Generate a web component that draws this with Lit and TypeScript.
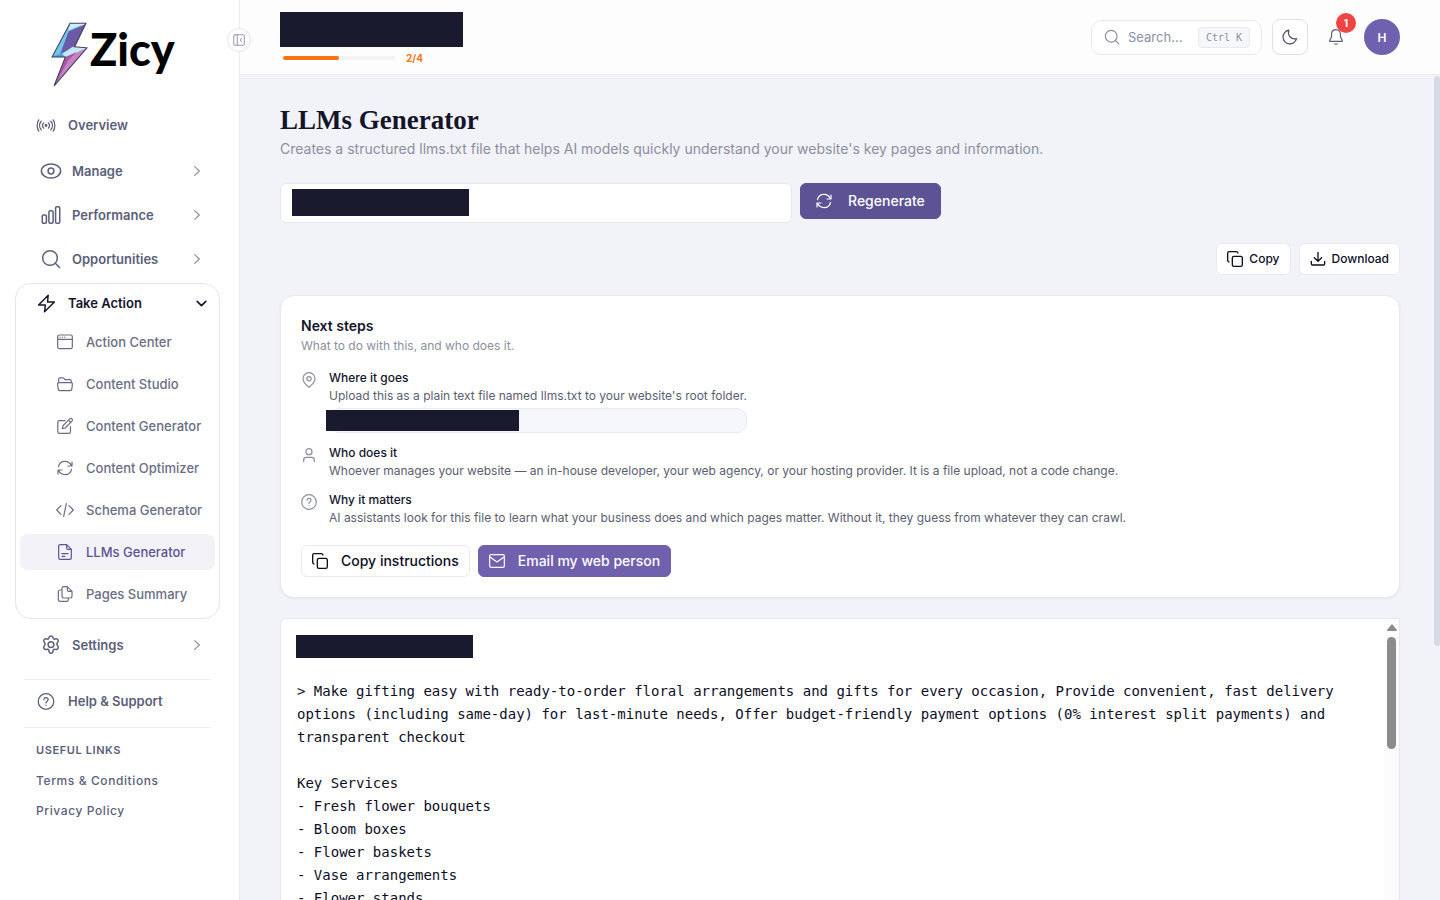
import { LitElement, html, css, svg, nothing } from "lit";
import { customElement, property, state } from "lit/decorators.js";
import { classMap } from "lit/directives/class-map.js";

const icons: Record<string, unknown> = {
  overview: svg`<circle cx="12" cy="12" r="1.2" fill="currentColor"/><path d="M8.6 8.2c-1.9 2.2-1.9 5.4 0 7.6M15.400 8.200c1.900 2.200 1.900 5.400 0 7.600M5.200 6c-3 3.500-3 8.500 0 12M18.800 6c3 3.500 3 8.500 0 12M1.800 4c-3 4.500-3 11.500 0 16M22.200 4c3 4.500 3 11.500 0 16"/>`,
  eye: svg`<path d="M12 3.500c6 0 11.500 3.500 11.500 8.500s-5.500 8.500-11.500 8.500S.5 17 .5 12 6 3.500 12 3.500z"/><circle cx="12" cy="12" r="3.500"/>`,
  bars: svg`<rect x="1.500" y="12" width="5" height="10" rx="1.500"/><rect x="9.500" y="7" width="5" height="15" rx="1.500"/><rect x="17.500" y="2" width="5" height="20" rx="1.500"/>`,
  search: svg`<circle cx="10.800" cy="10.800" r="8.800"/><path d="m17.200 17.200 5 5"/>`,
  bolt: svg`<path d="M14.200 1.500 2 14h8.500l-1 8.500L22 10h-8.700z"/>`,
  window: svg`<rect x="1" y="1.500" width="22" height="20.500" rx="2.500"/><path d="M1 8h22M4.500 4.800h.1M8 4.800h.1M11.500 4.800h.1"/>`,
  folder: svg`<path d="M2.500 10V5c0-1.500.8-2.300 2.200-2.300h4c.8 0 1.500.3 2 .9l1.300 1.700h7c1.500 0 2.500.9 2.500 2.400V10M3.200 9.800h17.600c1.500 0 2.500 1 2.300 2.500l-.8 7c-.2 1.500-1.100 2.500-2.600 2.500H4.300c-1.500 0-2.400-1-2.600-2.500l-.8-7C.7 10.800 1.700 9.800 3.200 9.800z"/>`,
  edit: svg`<path d="M12 4H3.700C2.200 4 1.200 5 1.200 6.500v14c0 1.500 1 2.500 2.500 2.500h14c1.500 0 2.500-1 2.500-2.500V13M8 16l1-4.500L19.200 1.400c1-1 2.500-.9 3.300 0s.8 2.300 0 3.200L12.300 15zM17.500 3.500l3.200 3.200"/>`,
  sync: svg`<path d="M22.500 3v6H16.500M1.500 21v-6H7.500M2.200 10C3.200 5.500 7.200 2 12 2c4 0 7.800 2.500 9.800 6.500M21.800 14c-1 4.500-5 8-9.800 8-4 0-7.800-2.500-9.800-6.500"/>`,
  code: svg`<path d="M6 5.500 -.5 12l6.500 6.500M18 5.500l6.500 6.500-6.500 6.500M14 2.500l-4 19"/>`,
  file: svg`<path d="M14.500 1H5C3.500 1 2.500 2 2.500 3.500v17C2.500 22 3.500 23 5 23h14c1.500 0 2.500-1 2.500-2.500V8zM14.500 1v5c0 1.300.7 2 2 2h5M7.500 14.500h9M7.500 18.500h4.500"/>`,
  files: svg`<path d="M15.500 1H10C8.500 1 7.500 2 7.500 3.500v12c0 1.500 1 2.500 2.500 2.500h10c1.500 0 2.500-1 2.500-2.500V8zM15.500 1v5c0 1.300.7 2 2 2h5M7.500 6H4.500C3 6 2 7 2 8.500v12C2 22 3 23 4.500 23h10c1.500 0 2.500-1 2.500-2.500V18"/>`,
  gear: svg`<path d="M9.800 2.500c.3-.9 1-1.300 2.200-1.300s1.900.4 2.200 1.300l.4 1.300c.3.800 1.200 1.300 2 1.100l1.400-.3c1.100-.2 1.800.2 2.400 1.300.6 1 .6 1.800-.1 2.600l-.9 1c-.6.700-.6 1.600 0 2.300l.9 1.700c.7.800.7 1.600.1 2.600-.6 1.100-1.300 1.500-2.400 1.300l-1.400-.3c-.8-.2-1.700.3-2 1.100l-.4 2.300c-.3.900-1 1.300-2.200 1.300s-1.900-.4-2.200-1.300l-.4-2.300c-.3-.8-1.200-1.300-2-1.100l-1.400.3c-1.100.2-1.800-.2-2.400-1.300-.6-1-.6-1.800.1-2.600l.9-1.700c.6-.7.6-1.600 0-2.300l-.9-1c-.7-.8-.7-1.600-.1-2.600.6-1.100 1.300-1.500 2.400-1.300l1.400.3c.8.200 1.700-.3 2-1.100z"/><circle cx="12" cy="11.500" r="3.500"/>`,
  help: svg`<circle cx="12" cy="12" r="11"/><path d="M9 9.200c.2-1.600 1.400-2.700 3-2.700 1.700 0 3 1.200 3 2.800 0 2.200-3 2.300-3 4.700M12 17.200v.2"/>`,
  chevron: svg`<path d="m8 4.500 8 7.500-8 7.500"/>`,
  down: svg`<path d="m4 8 8 8 8-8"/>`,
  moon: svg`<path d="M21.800 14.500A10.300 10.300 0 1 1 10.300 1.800c-2.600 7.700 3.500 14.300 11.500 12.700z"/>`,
  bell: svg`<path d="M12 .8c-4 0-6.700 3-6.700 7v4L2.500 17.200c-.3.800 0 1.300 1 1.300h17c1 0 1.300-.5 1-1.300l-2.800-5.400v-4c0-4-2.700-7-6.700-7zM9.800 22.500h4.400"/>`,
  copy: svg`<rect x="8" y="8" width="15" height="15" rx="2.500"/><path d="M3 16.500C1.700 16 1 15.300 1 14V3.500C1 2 2 1 3.500 1H14c1.300 0 2 .7 2.500 2"/>`,
  download: svg`<path d="M12 2v13.500M6.500 10l5.500 5.500 5.500-5.500M2 15.500V19c0 1.300.8 2 2 2h16c1.300 0 2-.8 2-2v-3.500"/>`,
  pin: svg`<path d="M21 10c0 5.500-6 10.500-9 13C9 20.500 3 15.500 3 10a9 9 0 0 1 18 0z"/><circle cx="12" cy="10" r="3.200"/>`,
  user: svg`<circle cx="12" cy="7" r="4.500"/><path d="M4 22v-2.500C4 17 5.800 15.500 8 15.500h8c2.200 0 4 1.500 4 4V22"/>`,
  mail: svg`<rect x="1" y="2.500" width="22" height="19" rx="2"/><path d="m2 6.500 10 7 10-7"/>`,
  panel: svg`<rect x="1.500" y="1.500" width="21" height="21" rx="2.500"/><path d="M8.500 1.500v21M17 9l-3 3 3 3"/>`,
};

@customElement("ui-icon")
class UiIcon extends LitElement {
  @property() name = "";
  static styles = css`
    :host { display: inline-flex; flex: none; width: 16px; height: 16px; }
    .glyph { width: 100%; height: 100%; fill: none; stroke: currentColor; stroke-width: var(--stroke, 1.8);
      stroke-linecap: round; stroke-linejoin: round; overflow: visible; }
  `;
  render() {
    return html`<svg class="glyph" viewBox="0 0 24 24" aria-hidden="true">${icons[this.name]}</svg>`;
  }
}

@customElement("app-sidebar")
class AppSidebar extends LitElement {
  @state() private open = true;

  static styles = css`
    :host { display: block; position: relative; z-index: 2; box-sizing: border-box; flex: none; width: 240px;
      background: #fff; border-right: 1px solid #e8eaf2; font-size: 13px; color: #5b607a; }
    a, button { color: inherit; font: inherit; text-decoration: none; }
    button { background: none; border: 0; padding: 0; cursor: pointer; text-align: left; }
    .brand { display: flex; align-items: center; gap: 2px; height: 68px; padding: 21px 0 14px 50px; }
    .mark { width: 38px; height: 66px; flex: none; }
    .word { font: 900 45px/60px Lato, sans-serif; color: #000; padding-bottom: 12px; }
    .row { display: flex; align-items: center; box-sizing: border-box; width: 100%; height: 44px; font-weight: 600; }
    .plain { padding: 0 36px; gap: 12px; }
    .plain ui-icon { width: 20px; height: 17px; }
    .parent { padding: 0 35px 0 41px; gap: 11px; }
    .parent ui-icon { width: 20px; height: 20px; }
    .label { flex: 1; }
    .row .arrow { width: 14px; height: 14px; color: #8b8fa6; --stroke: 2; }
    .first { margin-bottom: 2px; }
    .group { box-sizing: border-box; margin: 2px 19px 4px 15px; border: 1px solid #e4e5f0; border-radius: 16px;
      padding: 0 4px 6px; }
    .head { height: 38px; padding: 0 7px 0 17px; gap: 12px; color: #14152b; }
    .head ui-icon { width: 19px; height: 19px; }
    .head .arrow { width: 13px; height: 13px; color: #14152b; --stroke: 3; }
    .sub { display: flex; flex-direction: column; gap: 6px; padding-top: 2px; }
    .item { display: flex; align-items: center; gap: 13px; height: 36px; padding-left: 37px; border-radius: 8px;
      font-weight: 500; color: #6a6e85; }
    .item.on { background: #f3f2f8; color: #5d5294; }
    .rule { height: 1px; border: 0; margin: 0 28px 0 24px; background: #eceef4; }
    .settings { margin-bottom: 12px; }
    .help { height: 42px; margin-bottom: 5px; }
    .links { display: flex; flex-direction: column; padding: 7px 36px; font-size: 12px; line-height: 30px; font-weight: 500;
      letter-spacing: 0.05em; }
    .title { margin: 0 0 1px; font-size: 11px; font-weight: 600; line-height: 30px; }
    .toggle { position: absolute; top: 28px; right: -12px; box-sizing: border-box; width: 24px; height: 24px;
      border: 1px solid #e4e5f0; border-radius: 50%; background: #fff; display: grid; place-items: center; color: #8b8fae; }
    .toggle ui-icon { width: 12px; height: 12px; }
  `;

  private parent(icon: string, label: string, cls = "") {
    return html`<button class="row parent ${cls}"><ui-icon name=${icon}></ui-icon><span class="label">${label}</span
      ><ui-icon class="arrow" name="chevron"></ui-icon></button>`;
  }

  render() {
    const items = [
      ["window", "Action Center"], ["folder", "Content Studio"], ["edit", "Content Generator"], ["sync", "Content Optimizer"],
      ["code", "Schema Generator"], ["file", "LLMs Generator"], ["files", "Pages Summary"],
    ];
    return html`
      <div class="brand">
        <svg class="mark" viewBox="0 0 37 64" aria-hidden="true">
          <path fill="#70c5ec" d="M19.500 1.500 2 34h13l5-7L15 26 31 2z"/>
          <path fill="#c9edf8" d="M19.500 1.500 35 1.500 18 8z"/>
          <path fill="#6b5aa8" d="M35 1.500 18 9 10 31 24 24z"/>
          <path fill="#4e9ed8" d="M2 34 11 30l4 4z"/>
          <path fill="#bfe9f5" d="M12 31 22 24l14 1-21 9z"/>
          <path fill="#c583c4" d="M36 25 4 62l12-28z"/>
          <path fill="#a956a5" d="M15 34 4 62l14-25 8-8z"/>
          <path fill="none" stroke="#3d3d55" d="M19.500 1H35L24 24l12 1L4 62l11-28H2z"/>
        </svg>
        <span class="word">Zicy</span>
      </div>
      <nav aria-label="Main">
        <a class="row plain first" href="#overview"><ui-icon name="overview"></ui-icon>Overview</a>
        ${this.parent("eye", "Manage")} ${this.parent("bars", "Performance")} ${this.parent("search", "Opportunities")}
        <div class="group">
          <button class="row head" aria-expanded=${this.open} @click=${() => (this.open = !this.open)}>
            <ui-icon name="bolt"></ui-icon><span class="label">Take Action</span><ui-icon class="arrow" name="down"></ui-icon>
          </button>
          ${this.open
            ? html`<div class="sub">${items.map(([icon, text]) => html`<a href="#${icon}"
                class=${classMap({ item: true, on: icon === "file" })}><ui-icon name=${icon}></ui-icon>${text}</a>`)}</div>`
            : nothing}
        </div>
        ${this.parent("gear", "Settings", "settings")}
        <hr class="rule" />
        <a class="row plain help" href="#help"><ui-icon name="help"></ui-icon>Help &amp; Support</a>
        <hr class="rule" />
        <div class="links">
          <h2 class="title">USEFUL LINKS</h2>
          <a href="#terms">Terms &amp; Conditions</a>
          <a href="#privacy">Privacy Policy</a>
        </div>
      </nav>
      <button class="toggle" aria-label="Collapse sidebar"><ui-icon name="panel"></ui-icon></button>
    `;
  }
}

@customElement("app-header")
class AppHeader extends LitElement {
  static styles = css`
    :host { display: flex; justify-content: space-between; align-items: flex-start; box-sizing: border-box; flex: none;
      height: 75px; padding: 12px 40px 0; background: #fdfdfd; border-bottom: 1px solid #eceef3; }
    button { padding: 0; font: inherit; cursor: pointer; }
    .mask { width: 183px; height: 35px; background: #1a1a2e; }
    .progress { display: flex; align-items: center; gap: 11px; padding: 4px 3px; font-size: 10px; line-height: 14px;
      font-weight: 700; color: #f97316; }
    .track { width: 112px; height: 4px; border-radius: 2px; background: #f3f3f4; }
    .fill { height: 4px; border-radius: 2px; background: #f97316; }
    .tools { display: flex; align-items: center; gap: 10px; height: 50px; }
    .search { display: flex; align-items: center; gap: 8px; box-sizing: border-box; width: 171px; height: 35px; padding: 0 11px 0 12px;
      border: 1px solid #e8e9f2; border-radius: 10px; background: #fff; color: #8b8fa6; }
    .field { flex: 1; min-width: 0; border: 0; outline: 0; padding: 0; background: none; font: 400 13px/20px Inter, sans-serif; }
    .field::placeholder { color: #8b8fa6; opacity: 1; }
    .key { box-sizing: border-box; height: 21px; padding: 0 7px; border: 1px solid #e8eaf2; border-radius: 4px;
      background: #f6f7fb; font: 500 10px/19px "DejaVu Sans Mono", monospace; }
    .square { display: grid; place-items: center; box-sizing: border-box; width: 36px; height: 36px; border: 1px solid #dfe0ee;
      border-radius: 8px; background: #fff; color: #4b4f6b; }
    .bell { position: relative; display: grid; place-items: center; width: 36px; height: 36px; border: 0; background: none;
      color: #5b607a; }
    .badge { position: absolute; top: -6px; right: -2px; width: 20px; border-radius: 50%; background: #ef4444; color: #fff;
      font-size: 10px; line-height: 20px; font-weight: 700; }
    .avatar { width: 36px; height: 36px; border: 0; border-radius: 50%; background: #6f61ae; color: #fff; font-size: 12px;
      font-weight: 600; }
  `;
  render() {
    const done = 2, total = 4;
    return html`
      <div>
        <div class="mask"></div>
        <div class="progress">
          <div class="track"><div class="fill" style="width:${(done / total) * 100}%"></div></div>
          <span>${done}/${total}</span>
        </div>
      </div>
      <div class="tools">
        <label class="search"><ui-icon name="search"></ui-icon
          ><input class="field" type="text" placeholder="Search..." aria-label="Search" /><kbd class="key">Ctrl K</kbd></label>
        <button class="square" aria-label="Dark mode"><ui-icon name="moon"></ui-icon></button>
        <button class="bell" aria-label="Notifications"><ui-icon name="bell"></ui-icon><span class="badge">1</span></button>
        <button class="avatar" aria-label="Account">H</button>
      </div>
    `;
  }
}

const OUTPUT = `> Make gifting easy with ready-to-order floral arrangements and gifts for every occasion, Provide convenient, fast delivery options (including same-day) for last-minute needs, Offer budget-friendly payment options (0% interest split payments) and transparent checkout

Key Services
- Fresh flower bouquets
- Bloom boxes
- Flower baskets
- Vase arrangements
- Flower stands`;

@customElement("app-root")
class AppRoot extends LitElement {
  static styles = css`
    :host { display: flex; height: 100vh; overflow: hidden; font-family: Inter, sans-serif; background: #f2f3f8; color: #14152b; }
    .body { flex: 1; min-width: 0; display: flex; flex-direction: column; position: relative; }
    .page { flex: 1; min-height: 0; overflow-y: auto; scrollbar-width: none; padding: 29px 40px 40px; }
    .pagebar { position: absolute; top: 76px; right: 0; width: 6px; height: 570px; border-radius: 3px; background: #d6d9e6; }
    h1, h2, h3, p { margin: 0; }
    h1 { font: 700 27px/32px "Liberation Serif", serif; }
    .lead { font-size: 14px; line-height: 24px; margin-bottom: 22px; padding-top: 1px; color: #8b8f9f; }
    .form { display: flex; align-items: flex-start; gap: 8px; margin-bottom: 20px; }
    .url { position: relative; width: 512px; }
    .url input { display: block; box-sizing: border-box; width: 100%; height: 40px; border: 1px solid #e5e7f0; border-radius: 6px;
      padding: 0 12px; background: #fff; }
    .mask { background: #1a1a2e; }
    .url .mask { position: absolute; top: 6px; left: 12px; width: 177px; height: 27px; }
    .btn { display: inline-flex; align-items: center; box-sizing: border-box; height: 32px; padding: 0 10px; border: 1px solid #e9eaf0;
      border-radius: 6px; background: #fff; color: #0d0e1f; font: 500 14px/20px Inter, sans-serif; cursor: pointer; }
    .btn ui-icon { --stroke: 2; }
    .small { font-size: 12px; gap: 6px; }
    .wide { gap: 13px; }
    .purple { background: #6f61ae; border-color: #6f61ae; color: #fff; }
    .purple ui-icon { --stroke: 1.8; }
    .regen { height: 36px; padding: 0 15px; gap: 16px; background: #5d5294; border-color: #5d5294; }
    .tools { display: flex; justify-content: flex-end; gap: 8px; margin-bottom: 20px; }
    .card { border: 1px solid #e8e9f1; border-radius: 14px; background: #fff; padding: 20px; margin-bottom: 20px;
      box-shadow: 0 1px 2px #1a1a2e0d; }
    .card h2 { font-size: 14px; line-height: 20px; font-weight: 600; }
    .hint { font-size: 12px; line-height: 20px; color: #8b8f9f; margin-bottom: 13px; }
    .steps { display: flex; flex-direction: column; align-items: flex-start; gap: 11px; margin-bottom: 18px; font-size: 12px;
      line-height: 18px; }
    .step { display: flex; gap: 12px; }
    .step ui-icon { margin-top: 3px; color: #8b8fa3; }
    .step h3 { font-size: 12px; line-height: 18px; font-weight: 500; }
    .step p { color: #5a5e70; }
    .pill { position: relative; box-sizing: border-box; height: 25px; margin-top: 3px; border: 1px solid #eaebf3; border-radius: 10px;
      background: #f6f7fc; }
    .pill .mask { position: absolute; top: 1px; left: -4px; width: 193px; height: 21px; }
    .actions { display: flex; gap: 8px; }
    .output { position: relative; box-sizing: border-box; height: 600px; border: 1px solid #e5e6ef; border-radius: 6px 0 0 6px;
      background: #fff; padding: 16px 48px 16px 16px; }
    .output .mask { width: 177px; height: 23px; margin-left: -1px; }
    pre { margin: 22px 0 0; font: 400 14px/23px "DejaVu Sans Mono", monospace; white-space: pre-wrap; color: #0d0e1f; }
    .bar { position: absolute; top: 0; right: 0; bottom: 0; width: 15px; background: #fcfcfc; display: flex;
      flex-direction: column; align-items: center; gap: 6px; padding-top: 5px; box-sizing: border-box; }
    .up { width: 10px; height: 7px; fill: #8b8b8b; }
    .thumb { width: 9px; height: 112px; border-radius: 5px; background: #8b8b8b; }
  `;

  private step(icon: string, title: string, text: string, extra: unknown = nothing) {
    return html`<div class="step"><ui-icon name=${icon}></ui-icon><div><h3>${title}</h3><p>${text}</p>${extra}</div></div>`;
  }

  render() {
    return html`
      <app-sidebar></app-sidebar>
      <div class="body">
        <app-header></app-header>
        <main class="page">
          <h1>LLMs Generator</h1>
          <p class="lead">Creates a structured llms.txt file that helps AI models quickly understand your website's key pages and information.</p>
          <form class="form" @submit=${(e: Event) => e.preventDefault()}>
            <div class="url"><input type="url" aria-label="Website URL" /><div class="mask"></div></div>
            <button class="btn purple regen"><ui-icon name="sync"></ui-icon>Regenerate</button>
          </form>
          <div class="tools">
            <button class="btn small"><ui-icon name="copy"></ui-icon>Copy</button>
            <button class="btn small"><ui-icon name="download"></ui-icon>Download</button>
          </div>
          <section class="card">
            <h2>Next steps</h2>
            <p class="hint">What to do with this, and who does it.</p>
            <div class="steps">
              ${this.step("pin", "Where it goes", "Upload this as a plain text file named llms.txt to your website's root folder.",
                html`<div class="pill"><div class="mask"></div></div>`)}
              ${this.step("user", "Who does it", "Whoever manages your website — an in-house developer, your web agency, or your hosting provider. It is a file upload, not a code change.")}
              ${this.step("help", "Why it matters", "AI assistants look for this file to learn what your business does and which pages matter. Without it, they guess from whatever they can crawl.")}
            </div>
            <div class="actions">
              <button class="btn wide"><ui-icon name="copy"></ui-icon>Copy instructions</button>
              <button class="btn wide purple"><ui-icon name="mail"></ui-icon>Email my web person</button>
            </div>
          </section>
          <section class="output">
            <div class="mask"></div>
            <pre>${OUTPUT}</pre>
            <div class="bar"><svg class="up" viewBox="0 0 10 7"><path d="M5 0 10 6Q10 7 9 7H1Q0 7 0 6z"/></svg><div class="thumb"></div></div>
          </section>
        </main>
        <div class="pagebar"></div>
      </div>
    `;
  }
}
